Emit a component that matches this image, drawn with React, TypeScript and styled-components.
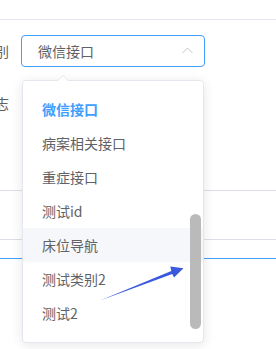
import styled, { createGlobalStyle } from 'styled-components';

const GlobalStyle = createGlobalStyle`
  body {
    margin: 0;
    background: #fff;
    font-family: "Noto Sans CJK SC", "Noto Sans", sans-serif;
    overflow: hidden;
  }
`;

const options = ['检验接口', '微信接口', '病案相关接口', '重症接口', '测试id', '床位导航', '测试类别2', '测试2'];
const selected = '微信接口';
const hovered = '床位导航';

const App = () => {
  return (
    <Page>
      <GlobalStyle />
      <TopBar />
      <Form>
        <FormItem>
          <Label>接口类别</Label>
          <Select>
            <SelectText>{selected}</SelectText>
            <svg width="11" height="7" viewBox="0 0 11 7">
              <path d="M0.5 6 L5.5 1 L10.5 6" fill="none" stroke="#c0c4cc" strokeWidth="1" />
            </svg>
          </Select>
        </FormItem>
        <FormItem>
          <Label>记录日志</Label>
        </FormItem>
      </Form>
      <TableArea>
        <GrayRow />
        <TabRow />
      </TableArea>

      <Dropdown>
        <PopperArrow />
        <List>
          {options.map(o => (
            <Item key={o} $selected={o === selected} $hover={o === hovered}>
              {o}
            </Item>
          ))}
        </List>
        <Thumb />
      </Dropdown>

      <Annotation width="276" height="349" viewBox="0 0 276 349">
        <polygon points="100,300.5 172.3,273.9 174,277.4 183.5,268.3 170.3,266.6 171.3,270.9" fill="#3b59de" />
      </Annotation>
    </Page>
  );
};

const Page = styled.div`
  position: relative;
  width: 276px;
  height: 349px;
  overflow: hidden;
`;

const TopBar = styled.div`
  height: 19px;
  border-bottom: 1px solid #e4e7ed;
`;

const Form = styled.div`
  margin-left: -71px;
  padding-top: 15px;
  display: flex;
  flex-direction: column;
  gap: 20px;
`;

const FormItem = styled.div`
  display: flex;
  align-items: center;
  height: 32px;
`;

const Label = styled.label`
  width: 80px;
  padding-right: 12px;
  text-align: right;
  font-size: 14px;
  color: #606266;
  flex-shrink: 0;
`;

const Select = styled.div`
  box-sizing: border-box;
  width: 184px;
  height: 32px;
  border: 1px solid #409eff;
  border-radius: 4px;
  display: flex;
  align-items: center;
  justify-content: space-between;
  padding: 0 11px 0 16px;
  svg {
    margin-bottom: 2px;
  }
`;

const SelectText = styled.span`
  font-size: 14px;
  color: #606266;
`;

const TableArea = styled.div`
  margin-top: 71px;
`;

const GrayRow = styled.div`
  height: 48px;
  border-top: 1px solid #dcdfe6;
  border-bottom: 1px solid #dcdfe6;
`;

const TabRow = styled.div`
  height: 18px;
  border-bottom: 1px solid #409eff;
`;

const Dropdown = styled.div`
  position: absolute;
  left: 22px;
  top: 80px;
  box-sizing: border-box;
  width: 182px;
  height: 263px;
  border: 1px solid #e4e7ed;
  border-radius: 4px;
  background: #fff;
  box-shadow: 0 2px 12px rgba(0, 0, 0, 0.1);
`;

const PopperArrow = styled.div`
  position: absolute;
  top: -6px;
  left: 34px;
  width: 0;
  height: 0;
  border-left: 6px solid transparent;
  border-right: 6px solid transparent;
  border-bottom: 6px solid #e4e7ed;
  &::after {
    content: '';
    position: absolute;
    left: -5px;
    top: 1px;
    border-left: 5px solid transparent;
    border-right: 5px solid transparent;
    border-bottom: 5px solid #fff;
  }
`;

const List = styled.ul`
  list-style: none;
  margin: 0;
  padding: 0;
  height: 100%;
  overflow: hidden;
  border-radius: 4px;
  & > li:first-child {
    margin-top: -23px;
    line-height: 30px;
    color: #8a8c91;
  }
`;

const Item = styled.li<{ $selected?: boolean; $hover?: boolean }>`
  height: 34px;
  line-height: 34px;
  padding-left: 19px;
  font-size: 14px;
  color: ${p => (p.$selected ? '#409eff' : '#606266')};
  font-weight: ${p => (p.$selected ? 700 : 400)};
  background: ${p => (p.$hover ? '#f5f7fa' : '#fff')};
  white-space: nowrap;
`;

const Thumb = styled.div`
  position: absolute;
  right: 2px;
  top: 133px;
  width: 11px;
  height: 115px;
  border-radius: 6px;
  background: #bababa;
`;

const Annotation = styled.svg`
  position: absolute;
  left: 0;
  top: 0;
  pointer-events: none;
`;

export default App;
